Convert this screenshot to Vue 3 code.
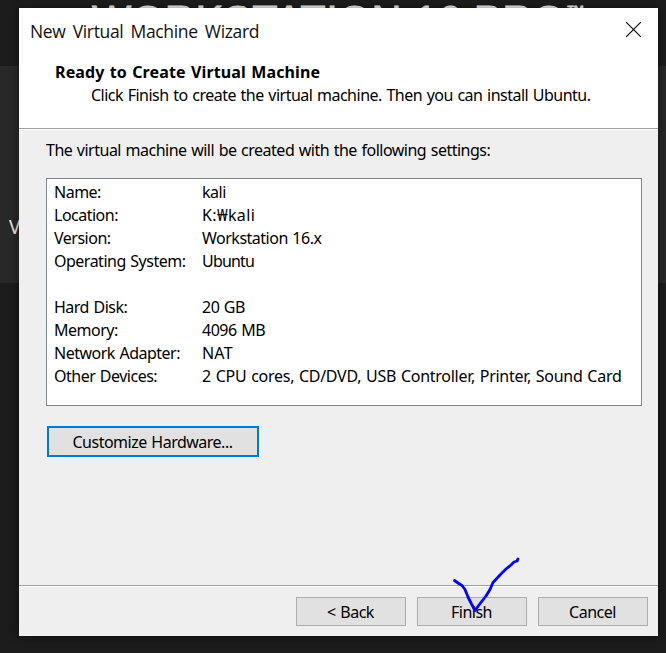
<script setup>
const settings = [
  { label: 'Name:', value: 'kali' },
  { label: 'Location:', value: 'K:₩kali', fit: 'path' },
  { label: 'Version:', value: 'Workstation 16.x' },
  { label: 'Operating System:', value: 'Ubuntu', fit: 'tight' },
  { label: '', value: '' },
  { label: 'Hard Disk:', value: '20 GB' },
  { label: 'Memory:', value: '4096 MB' },
  { label: 'Network Adapter:', value: 'NAT', fit: 'caps' },
  { label: 'Other Devices:', value: '2 CPU cores, CD/DVD, USB Controller, Printer, Sound Card', fit: 'list' },
]
</script>

<template>
  <div class="desktop">
    <div class="product">WORKSTATION 16 PRO<sup>™</sup></div>
    <span class="behind">V</span>
    <section class="dialog">
      <header class="head">
        <div class="titlebar">
          <span class="title">New Virtual Machine Wizard</span>
          <svg class="close" width="15" height="15" viewBox="0 0 15 15">
            <path d="M0 0L15 15M15 0L0 15" stroke="#000" stroke-width="1.1" fill="none" />
          </svg>
        </div>
        <h1>Ready to Create Virtual Machine</h1>
        <p class="sub">Click Finish to create the virtual machine. Then you can install Ubuntu.</p>
      </header>
      <main class="body">
        <p class="intro">The virtual machine will be created with the following settings:</p>
        <dl class="settings">
          <div v-for="(s, i) in settings" :key="i" class="row">
            <dt>{{ s.label }}</dt>
            <dd :class="s.fit">{{ s.value }}</dd>
          </div>
        </dl>
        <button class="btn customize">Customize Hardware...</button>
      </main>
      <footer class="foot">
        <button class="btn">&lt; Back</button>
        <button class="btn">Finish</button>
        <button class="btn">Cancel</button>
      </footer>
    </section>
    <svg class="ink" width="70" height="60" viewBox="0 0 70 60">
      <path d="M4.500 26.500L8 29L12 31.500L15 35.500L18 43L21.500 50L25 56.500L29 51L36 42L40 35.500L43 28.500L50 21L56 15L61 11L64 8L67 7L68 5" />
    </svg>
  </div>
</template>

<style>
body { margin: 0; overflow: hidden; }
</style>
<style scoped>
* { box-sizing: border-box; margin: 0; }
.desktop {
  position: relative;
  width: 666px;
  height: 653px;
  padding: 8px 8px 17px 19px;
  overflow: hidden;
  background: linear-gradient(#1c1c1c 0 66px, #282828 66px 283px, #1c1c1c 283px);
  font-family: "Noto Sans", sans-serif;
  font-size: 16px;
  letter-spacing: -.5px;
  word-spacing: .9px;
  color: #000;
}
.product {
  position: absolute;
  left: 92px;
  top: -3px;
  font: 41.6px/48px "Liberation Sans", sans-serif;
  letter-spacing: .6px;
  word-spacing: 0;
  white-space: nowrap;
  color: #e8e8e8;
  -webkit-text-stroke: .8px #e8e8e8;
}
.product sup { font-size: 19px; line-height: 0; vertical-align: 16px; margin-left: 0; }
.behind { position: absolute; left: 9px; top: 216px; font-size: 19px; line-height: 22px; color: #e6e6e6; }
.dialog {
  position: relative;
  width: 639px;
  height: 628px;
  display: flex;
  flex-direction: column;
  background: #efefef;
  box-shadow: 0 1px 8px 1px rgba(0, 0, 0, .4);
}
.head { height: 120px; background: #fff; }
.titlebar { display: flex; justify-content: space-between; height: 53px; padding: 14px 17px 0 11px; }
.title { margin-top: -2px; font-family: "Open Sans", sans-serif; font-size: 17.5px; line-height: 22px; letter-spacing: -.35px; word-spacing: 3px; color: #111; }
.close { display: block; }
h1 { padding-left: 36px; font-size: 16px; line-height: 23px; font-weight: 700; letter-spacing: .14px; white-space: nowrap; }
.sub { padding-left: 72px; line-height: 23px; white-space: nowrap; }
.body {
  flex: 1;
  padding: 9px 16px 0 27px;
  border-top: 1px solid #a0a0a0;
  box-shadow: inset 0 1px #fff;
}
.intro { line-height: 24px; white-space: nowrap; }
.settings {
  width: 596px;
  height: 228px;
  margin-top: 16px;
  padding: 2px 7px;
  border: 1px solid #828790;
  background: #fff;
}
.row { display: grid; grid-template-columns: 148px 1fr; height: 23px; line-height: 23px; white-space: nowrap; }
.path { letter-spacing: .35px; }
.tight { letter-spacing: -.8px; }
.caps { letter-spacing: .2px; }
.list { letter-spacing: -.27px; }
.btn {
  width: 110px;
  height: 29px;
  padding: 1px 1px 0 0;
  border: 1px solid #adadad;
  background: #e1e1e1;
  font: inherit;
  line-height: 26px;
  letter-spacing: inherit;
  word-spacing: inherit;
  color: #000;
}
.customize { display: block; width: 212px; height: 31px; margin: 20px 0 0 1px; border: 2px solid #0078d7; }
.foot {
  display: flex;
  justify-content: flex-end;
  gap: 11px;
  height: 51px;
  padding: 11px 10px 0 0;
  border-top: 1px solid #a0a0a0;
  box-shadow: inset 0 1px #fff;
}
.ink { position: absolute; left: 450px; top: 554px; }
.ink path { fill: none; stroke: #00f; stroke-width: 2.8; stroke-linecap: round; stroke-linejoin: round; }
</style>
